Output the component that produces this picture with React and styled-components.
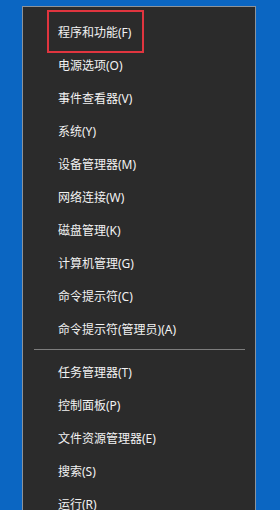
import styled, { createGlobalStyle } from "styled-components"

const GlobalStyle = createGlobalStyle`
  html, body {
    margin: 0;
    padding: 0;
    background: #0b66c2;
    overflow: hidden;
  }
  body {
    font-family: "Noto Sans", "Noto Sans CJK SC", sans-serif;
  }
`

const Desktop = styled.div`
  width: 280px;
  height: 510px;
  background: #0b66c2;
  padding: 6px 0 0 22px;
  box-sizing: border-box;
  overflow: hidden;
`

const Menu = styled.div`
  position: relative;
  width: 234px;
  height: 560px;
  box-sizing: border-box;
  background: #2b2b2b;
  border: 1px solid #8d939a;
  padding-top: 8px;
`

const Item = styled.div`
  height: 33px;
  display: flex;
  align-items: center;
  padding-left: 35px;
  color: #f2f2f2;
  font-size: 12px;
  font-family: "Noto Sans", "Noto Sans CJK SC", sans-serif;
  white-space: nowrap;
`

const Separator = styled.div`
  height: 1px;
  margin: 4px 10px 5px 11px;
  background: #7d7d7d;
`

const Highlight = styled.div`
  position: absolute;
  left: 24px;
  top: 3px;
  width: 97px;
  height: 43px;
  box-sizing: border-box;
  border: 2px solid #e0353f;
  pointer-events: none;
`

const topItems = [
  "程序和功能(F)",
  "电源选项(O)",
  "事件查看器(V)",
  "系统(Y)",
  "设备管理器(M)",
  "网络连接(W)",
  "磁盘管理(K)",
  "计算机管理(G)",
  "命令提示符(C)",
  "命令提示符(管理员)(A)",
]

const bottomItems = [
  "任务管理器(T)",
  "控制面板(P)",
  "文件资源管理器(E)",
  "搜索(S)",
  "运行(R)",
]

const App = () => {
  return (
    <>
      <GlobalStyle />
      <Desktop>
        <Menu>
          <Highlight />
          {topItems.map((t) => (
            <Item key={t}>{t}</Item>
          ))}
          <Separator />
          {bottomItems.map((t) => (
            <Item key={t}>{t}</Item>
          ))}
        </Menu>
      </Desktop>
    </>
  )
}

export default App
